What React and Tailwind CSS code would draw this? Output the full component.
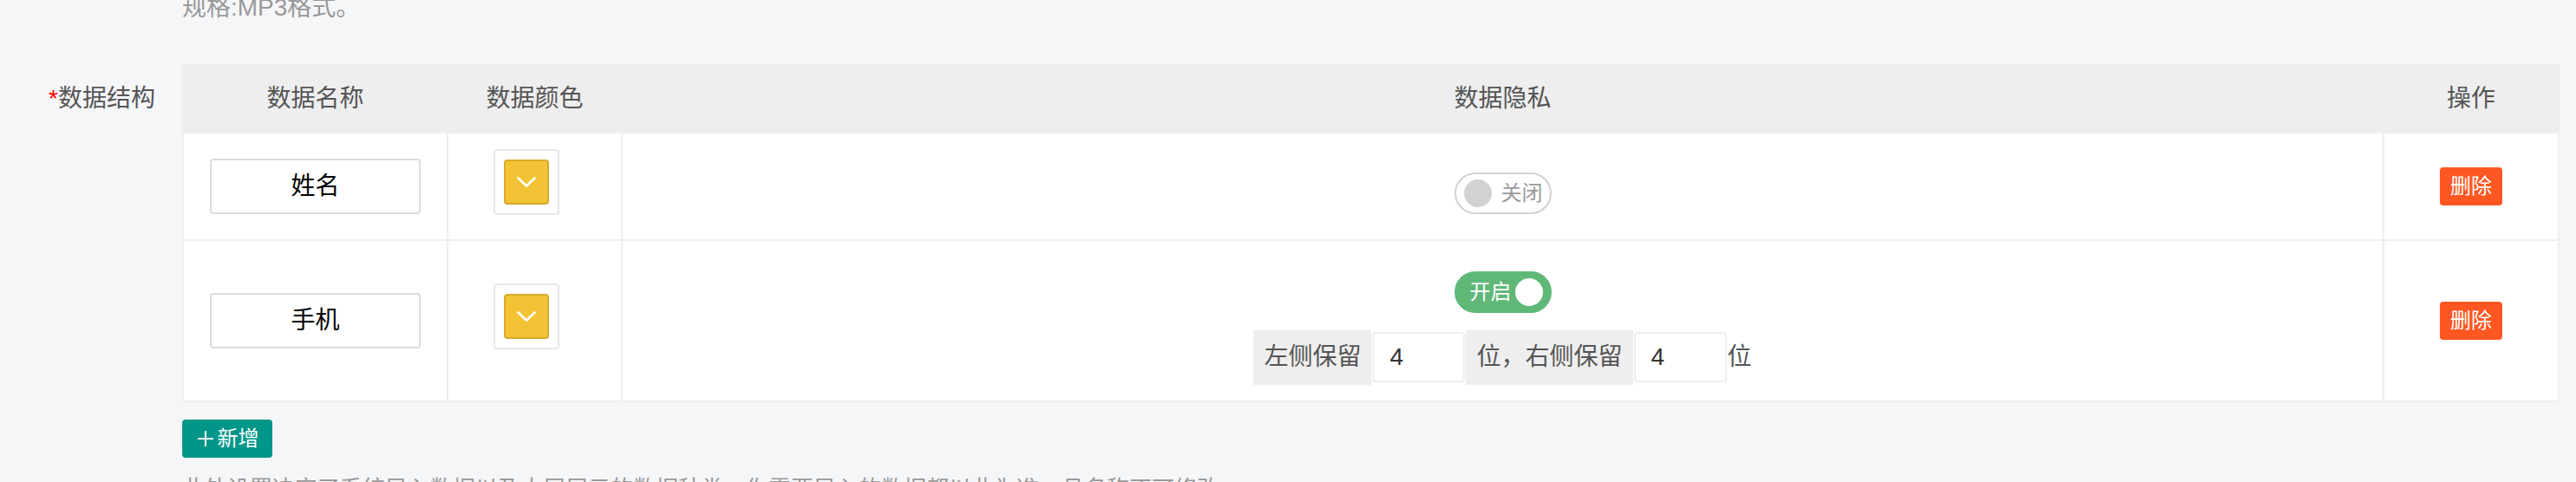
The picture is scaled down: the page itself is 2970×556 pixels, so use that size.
import { useState } from "react";

const rowsInit = [
  { id: 1, name: "姓名", color: "#F2C435", privacy: false, left: 4, right: 4 },
  { id: 2, name: "手机", color: "#F2C435", privacy: true, left: 4, right: 4 },
];

const Chevron = () => (
  <svg width="22" height="12" viewBox="0 0 22 12" fill="none">
    <path d="M1.5 1.5 L11 10.5 L20.5 1.5" stroke="#fff" strokeWidth="2.6" strokeLinecap="round" strokeLinejoin="round" />
  </svg>
);

const Switch = ({ on, onToggle }) =>
  on ? (
    <button
      onClick={onToggle}
      className="flex items-center w-[112px] h-[48px] rounded-full border-2 border-[#5FB878] bg-[#5FB878] pl-[16px]"
    >
      <span className="text-[24px] leading-none text-white">开启</span>
      <span className="ml-[4px] w-[32px] h-[32px] rounded-full bg-white" />
    </button>
  ) : (
    <button
      onClick={onToggle}
      className="flex items-center w-[112px] h-[48px] rounded-full border-2 border-[#d2d2d2] bg-white pl-[9px]"
    >
      <span className="w-[32px] h-[32px] rounded-full bg-[#d2d2d2]" />
      <span className="ml-[11px] text-[24px] leading-none text-[#999]">关闭</span>
    </button>
  );

const cell = "border-r-2 border-[#eee] flex items-center justify-center";

export default function App() {
  const [rows, setRows] = useState(rowsInit);

  const toggle = id =>
    setRows(prev => prev.map(r => (r.id === id ? { ...r, privacy: !r.privacy } : r)));
  const remove = id => setRows(prev => prev.filter(r => r.id !== id));

  return (
    <div className="w-[2970px] h-[556px] overflow-hidden bg-[#f5f6f8] flex flex-col font-['Liberation_Sans','Noto_Sans_CJK_SC',sans-serif]">
      {/* hint from the field above */}
      <div className="mt-[-11px] pl-[210px] h-[40px] leading-[40px] text-[28px] text-[#999]">
        规格:MP3格式。
      </div>

      <div className="mt-[45px] flex">
        {/* label */}
        <div className="w-[210px] h-[80px] flex items-center justify-end pr-[31px] text-[28px] text-[#555]">
          <span className="text-[#f00]">*</span>数据结构
        </div>

        <div className="flex flex-col">
          {/* table */}
          <div className="w-[2741px] border-x-2 border-[#eee] bg-white">
            <div className="grid grid-cols-[305px_201px_1fr_200px] h-[80px] bg-[#eee] text-[28px] text-[#555]">
              <div className={cell}>数据名称</div>
              <div className={cell}>数据颜色</div>
              <div className={cell}>数据隐私</div>
              <div className="flex items-center justify-center">操作</div>
            </div>

            {rows.map(r => (
              <div
                key={r.id}
                className={`grid grid-cols-[305px_201px_1fr_200px] border-b-2 border-[#eee] ${
                  r.privacy ? "h-[186px]" : "h-[124px]"
                }`}
              >
                <div className={cell}>
                  <div className="w-[243px] h-[64px] border-2 border-[#dcdcdc] rounded-[4px] flex items-center justify-center text-[28px] text-black">
                    {r.name}
                  </div>
                </div>

                <div className={cell}>
                  <div className="mb-[10px] mr-[20px] w-[76px] h-[76px] border-2 border-[#e8e8e8] rounded-[4px] bg-white flex items-center justify-center">
                    <div className="w-[52px] h-[52px] rounded-[4px] border-2 border-[#D6AA2C] bg-[#F2C435] flex items-center justify-center">
                      <Chevron />
                    </div>
                  </div>
                </div>

                <div className={`${cell} flex-col`}>
                  <div className="mt-[16px]">
                    <Switch on={r.privacy} onToggle={() => toggle(r.id)} />
                  </div>
                  {r.privacy && (
                    <div className="mt-[20px] flex items-center text-[28px] text-[#555]">
                      <div className="h-[63px] px-[12px] bg-[#eee] flex items-center">左侧保留</div>
                      <div className="mx-[1px] w-[107px] h-[58px] border-2 border-[#eee] rounded-[4px] bg-white flex items-center pl-[18px] text-[#333]">
                        {r.left}
                      </div>
                      <div className="h-[63px] px-[12px] bg-[#eee] flex items-center">位，右侧保留</div>
                      <div className="mx-[1px] w-[107px] h-[58px] border-2 border-[#eee] rounded-[4px] bg-white flex items-center pl-[18px] text-[#333]">
                        {r.right}
                      </div>
                      <div>位</div>
                    </div>
                  )}
                </div>

                <div className="flex items-center justify-center">
                  <button
                    onClick={() => remove(r.id)}
                    className="w-[72px] h-[44px] rounded-[4px] bg-[#FF5722] text-white text-[24px] leading-none"
                  >
                    删除
                  </button>
                </div>
              </div>
            ))}
          </div>

          <button className="mt-[20px] w-[104px] h-[44px] rounded-[4px] bg-[#009688] text-white text-[24px] leading-none flex items-center justify-center">
            <svg width="22" height="22" viewBox="0 0 22 22" className="mr-[3px]">
              <path d="M11 2v18M2 11h18" stroke="#fff" strokeWidth="2" />
            </svg>
            新增
          </button>

          <div className="mt-[16px] h-[40px] leading-[40px] text-[26px] text-[#999]">
            此处设置决定了系统导入数据以及大屏展示的数据种类，你需要导入的数据都以此为准，且名称不可修改。
          </div>
        </div>
      </div>
    </div>
  );
}
